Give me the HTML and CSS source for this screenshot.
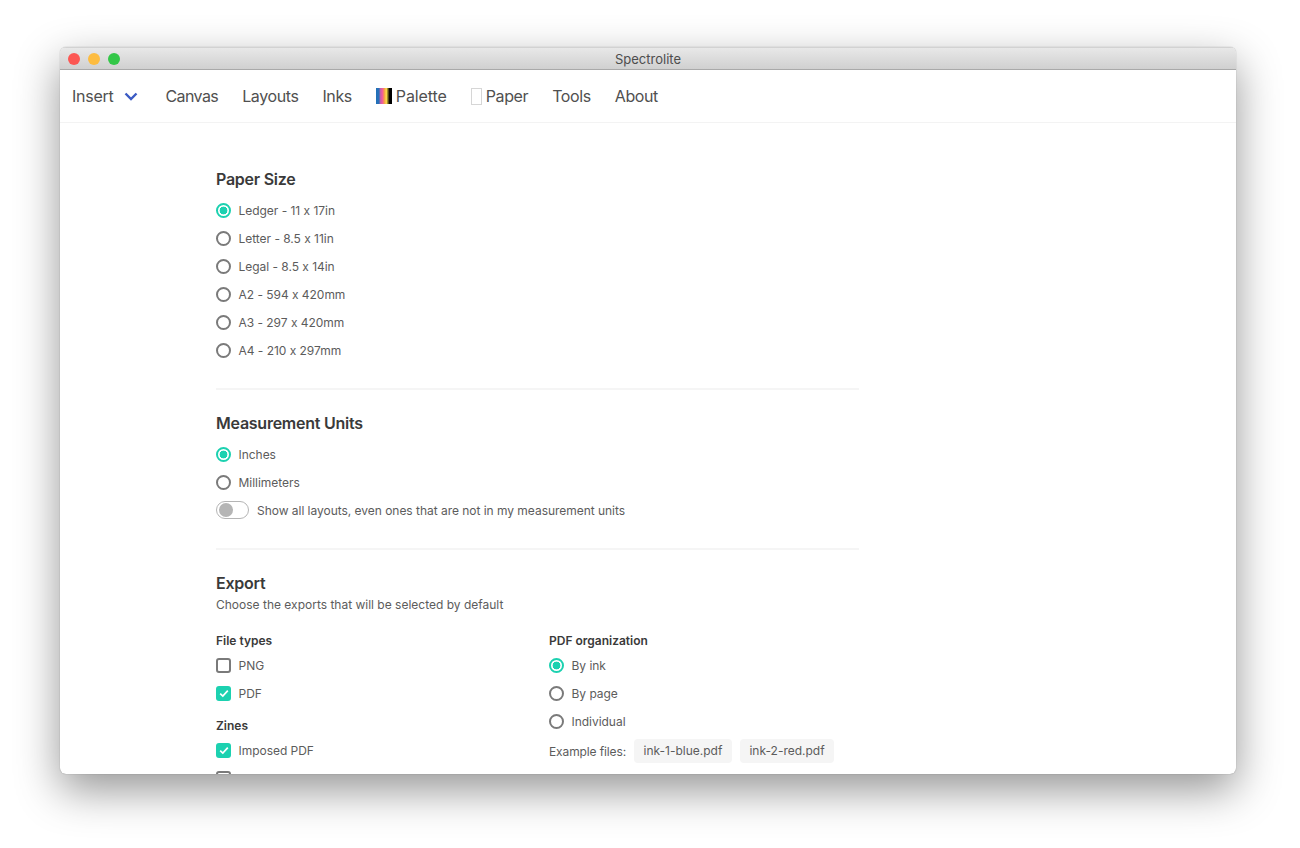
FILE: index.html
```html
<!DOCTYPE html>
<html lang="en">
  <head>
    <meta charset="UTF-8" />
    <meta name="viewport" content="width=device-width, initial-scale=1.0" />
    <title>Spectrolite</title>
    <link rel="stylesheet" href="styles.css">
  </head>
  <body>
    <div class="window">
      <header class="titlebar">
        <div class="lights">
          <span class="light light-red"></span>
          <span class="light light-yellow"></span>
          <span class="light light-green"></span>
        </div>
        <div class="window-title">Spectrolite</div>
      </header>

      <nav class="navbar">
        <a class="nav-item nav-insert" href="#">
          Insert
          <svg class="chevron" width="14" height="9" viewBox="0 0 14 9">
            <path d="M1.5 1.5 L7 7 L12.5 1.5" fill="none" stroke="#3b5bc4" stroke-width="2.4" />
          </svg>
        </a>
        <a class="nav-item nav-canvas" href="#">Canvas</a>
        <a class="nav-item" href="#">Layouts</a>
        <a class="nav-item" href="#">Inks</a>
        <a class="nav-item nav-palette" href="#"><span class="palette-swatch"></span>Palette</a>
        <a class="nav-item" href="#"><span class="paper-swatch"></span>Paper</a>
        <a class="nav-item" href="#">Tools</a>
        <a class="nav-item" href="#">About</a>
      </nav>

      <main class="content">
        <section class="section section-paper">
          <h2>Paper Size</h2>
          <label class="option"><span class="radio checked"></span>Ledger - 11 x 17in</label>
          <label class="option"><span class="radio"></span>Letter - 8.5 x 11in</label>
          <label class="option"><span class="radio"></span>Legal - 8.5 x 14in</label>
          <label class="option"><span class="radio"></span>A2 - 594 x 420mm</label>
          <label class="option"><span class="radio"></span>A3 - 297 x 420mm</label>
          <label class="option"><span class="radio"></span>A4 - 210 x 297mm</label>
        </section>

        <section class="section section-units">
          <h2>Measurement Units</h2>
          <label class="option"><span class="radio checked"></span>Inches</label>
          <label class="option"><span class="radio"></span>Millimeters</label>
          <label class="option option-toggle"><span class="toggle"></span>Show all layouts, even ones that are not in my measurement units</label>
        </section>

        <section class="section section-export">
          <h2>Export</h2>
          <p class="subtitle">Choose the exports that will be selected by default</p>
          <div class="export-columns">
            <div class="export-col">
              <h3>File types</h3>
              <label class="option"><span class="checkbox"></span>PNG</label>
              <label class="option">
                <span class="checkbox checked">
                  <svg width="10" height="9" viewBox="0 0 10 9"><path d="M1.2 4.6 L3.8 7 L8.8 1.6" fill="none" stroke="#fff" stroke-width="1.7" /></svg>
                </span>
                PDF
              </label>
              <h3 class="zines-title">Zines</h3>
              <label class="option">
                <span class="checkbox checked">
                  <svg width="10" height="9" viewBox="0 0 10 9"><path d="M1.2 4.6 L3.8 7 L8.8 1.6" fill="none" stroke="#fff" stroke-width="1.7" /></svg>
                </span>
                Imposed PDF
              </label>
              <label class="option"><span class="checkbox"></span></label>
            </div>
            <div class="export-col">
              <h3>PDF organization</h3>
              <label class="option"><span class="radio checked"></span>By ink</label>
              <label class="option"><span class="radio"></span>By page</label>
              <label class="option"><span class="radio"></span>Individual</label>
              <div class="example-files">
                <span class="example-label">Example files:</span>
                <span class="file-tag">ink-1-blue.pdf</span>
                <span class="file-tag">ink-2-red.pdf</span>
              </div>
            </div>
          </div>
        </section>
      </main>
    </div>
  </body>
</html>
```

FILE: styles.css
```css
* {
  margin: 0;
  padding: 0;
  box-sizing: border-box;
}

html,
body {
  height: 848px;
  overflow: hidden;
}

body {
  font-family: Inter, "Liberation Sans", sans-serif;
  font-feature-settings: "calt" 0;
  background-color: #fff;
  padding: 47px 64px 74px 60px;
  color: #5c5c5c;
}

.window {
  height: 727px;
  display: flex;
  flex-direction: column;
  overflow: hidden;
  background-color: #fff;
  border-radius: 6px;
  box-shadow: 0 16px 44px rgba(0, 0, 0, 0.42), 0 0 1px rgba(0, 0, 0, 0.45);
}

.titlebar {
  position: relative;
  flex: none;
  height: 23px;
  display: flex;
  align-items: center;
  justify-content: center;
  background: linear-gradient(#e8e8e8, #d0d0d0);
  border-top: 1px solid #d2d2d2;
  border-bottom: 1px solid #a9a9a9;
}

.lights {
  position: absolute;
  left: 8px;
  top: 5px;
  display: flex;
  gap: 8px;
}

.light {
  width: 12px;
  height: 12px;
  border-radius: 50%;
}

.light-red {
  background-color: #fc5753;
}

.light-yellow {
  background-color: #fdbc40;
}

.light-green {
  background-color: #33c748;
}

.window-title {
  font-size: 13px;
  color: #4d4d4d;
}

.navbar {
  flex: none;
  height: 53px;
  display: flex;
  align-items: center;
  gap: 24px;
  padding-left: 12px;
  border-bottom: 1px solid #f3f3f3;
}

.nav-item {
  display: flex;
  align-items: center;
  font-size: 16px;
  letter-spacing: -0.4px;
  color: #505050;
  text-decoration: none;
}

.nav-insert {
  margin-right: 4px;
  letter-spacing: -0.25px;
}

.nav-canvas {
  letter-spacing: -0.6px;
}

.nav-palette {
  letter-spacing: -0.1px;
}

.chevron {
  margin-left: 10px;
}

.palette-swatch {
  width: 16px;
  height: 16px;
  margin-right: 4px;
  background: linear-gradient(90deg, #1f6fb8 0%, #2a72b8 18%, #c25fa8 28%, #f25c9c 40%, #f79a4a 52%, #fde04a 65%, #7a6a20 75%, #000 85%);
}

.paper-swatch {
  width: 11px;
  height: 17px;
  margin-right: 4px;
  background-color: #fff;
  border: 1px solid #d6d6d6;
}

.content {
  flex: 1;
  min-height: 0;
  padding: 45px 0 0 156px;
  width: 799px;
}

.section {
  border-bottom: 2px solid #f5f5f5;
}

.section-paper {
  height: 222px;
  padding-top: 1px;
}

.section-units {
  height: 160px;
  padding-top: 23px;
}

.section-export {
  border-bottom: none;
  padding-top: 23px;
}

h2 {
  font-size: 16px;
  line-height: 20px;
  font-weight: 600;
  letter-spacing: -0.25px;
  color: #3a3a3a;
  margin-bottom: 7px;
}

h3 {
  font-size: 12px;
  line-height: 16px;
  font-weight: 600;
  color: #3a3a3a;
}

.subtitle {
  font-size: 12px;
  line-height: 16px;
  margin-top: -3px;
  margin-bottom: 20px;
}

.option {
  display: flex;
  align-items: center;
  height: 28px;
  font-size: 12px;
  letter-spacing: -0.03px;
  color: #5c5c5c;
}

.radio {
  flex: none;
  width: 15px;
  height: 15px;
  margin-right: 7.5px;
  border: 2px solid #7a7a7a;
  border-radius: 50%;
  background-color: #fff;
}

.radio.checked {
  border-color: #1cd1b0;
  background: radial-gradient(circle, #1cd1b0 0, #1cd1b0 3.6px, #fff 4.2px);
}

.checkbox {
  flex: none;
  width: 15px;
  height: 15px;
  margin-right: 7.5px;
  border: 2px solid #7a7a7a;
  border-radius: 3px;
}

.checkbox.checked {
  display: flex;
  align-items: center;
  justify-content: center;
  border: none;
  background-color: #1cd1b0;
}

.toggle {
  position: relative;
  flex: none;
  width: 33px;
  height: 18px;
  margin-right: 8px;
  border: 1px solid #b5b5b5;
  border-radius: 9px;
  background-color: #fff;
}

.toggle::after {
  content: "";
  position: absolute;
  left: 2px;
  top: 1px;
  width: 14px;
  height: 14px;
  border-radius: 50%;
  background-color: #b5b5b5;
}

.export-columns {
  display: flex;
}

.export-col {
  flex: none;
  width: 333px;
}

.export-col h3 {
  margin-bottom: 2px;
}

.export-col .zines-title {
  margin-top: 11px;
}

.example-files {
  display: flex;
  align-items: center;
  height: 28px;
  margin-top: 2px;
  font-size: 12px;
}

.example-label {
  margin-right: 8px;
  letter-spacing: -0.12px;
}

.file-tag {
  height: 24px;
  line-height: 24px;
  padding: 0 9.5px;
  margin-right: 8px;
  border-radius: 4px;
  background-color: #f5f5f5;
}
```
